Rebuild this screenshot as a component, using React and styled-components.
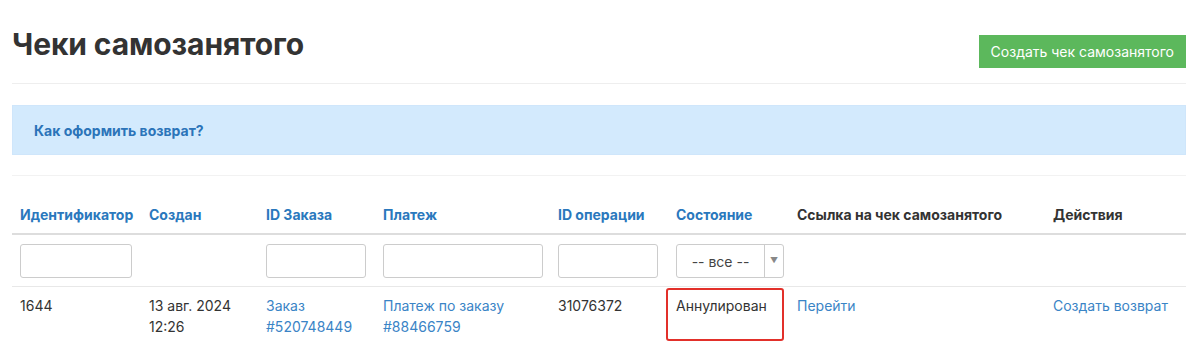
import React from 'react'
import styled, { createGlobalStyle } from 'styled-components'

const GlobalStyle = createGlobalStyle`
  body {
    margin: 0;
    background: #fff;
    font-family: Inter, "Noto Sans", Arial, sans-serif;
    color: #333;
  }
`

const Page = styled.div`
  padding: 0 14px 0 12px;
`

const TitleBar = styled.div`
  display: flex;
  justify-content: space-between;
  align-items: flex-start;
  padding: 26px 0 15px;
  border-bottom: 1px solid #eee;
`

const Title = styled.h1`
  margin: 0;
  font-size: 30px;
  font-weight: 700;
  line-height: 36px;
  color: #333;
  letter-spacing: -0.1px;
`

const GreenBtn = styled.button`
  margin-top: 9px;
  background: #5cb85c;
  border: none;
  color: #fff;
  font-family: inherit;
  font-size: 14px;
  height: 33px;
  padding: 0 12px;
  cursor: pointer;
`

const Alert = styled.div`
  margin-top: 21px;
  height: 50px;
  display: flex;
  align-items: center;
  padding: 0 21px;
  background: #d3eafd;
  border: 1px solid #cfe6fb;
  box-sizing: border-box;
`

const AlertLink = styled.a`
  font-size: 14px;
  font-weight: 700;
  color: #2b74b9;
  text-decoration: none;
`

const Table = styled.table`
  margin-top: 20px;
  width: 100%;
  table-layout: fixed;
  border-collapse: collapse;
  border-top: 1px solid #f2f2f2;
  font-size: 14px;
`

const Th = styled.th`
  text-align: left;
  vertical-align: bottom;
  font-weight: 700;
  padding: 29px 8px 8px;
  line-height: 20px;
  color: ${p => (p.$link ? '#2a78bd' : '#333')};
  border-bottom: 2px solid #ddd;
  white-space: nowrap;
`

const FilterCell = styled.td`
  padding: 9px 8px 8px;
  border-bottom: 1px solid #e8e8e8;
  height: 34px;
`

const Input = styled.input`
  display: block;
  box-sizing: border-box;
  width: ${p => p.$w}px;
  height: 34px;
  border: 1px solid #ccc;
  border-radius: 3px;
`

const Select = styled.div`
  display: flex;
  box-sizing: border-box;
  width: 108px;
  height: 34px;
  border: 1px solid #ccc;
  border-radius: 3px;
  font-size: 14px;
  color: #444;
`

const SelectValue = styled.div`
  flex: 1;
  display: flex;
  align-items: center;
  justify-content: center;
`

const SelectArrow = styled.div`
  width: 19px;
  border-left: 1px solid #ccc;
  color: #888;
  font-size: 8px;
  display: flex;
  justify-content: center;
  padding-top: 10px;
  box-sizing: border-box;
`

const Td = styled.td`
  padding: 8px 8px 0;
  vertical-align: top;
  line-height: 21px;
  height: 50px;
  color: #333;
  position: relative;
`

const Marked = styled(Td)`
  &::after {
    content: '';
    position: absolute;
    left: -2px;
    top: 1px;
    width: 118px;
    height: 53px;
    box-sizing: border-box;
    border: 2px solid #e2302a;
    border-radius: 3px;
  }
`

const Link = styled.a`
  color: #3a84c6;
  text-decoration: none;
`

const columns = [
  { title: 'Идентификатор', w: 129, link: true },
  { title: 'Создан', w: 117, link: true },
  { title: 'ID Заказа', w: 117, link: true },
  { title: 'Платеж', w: 175, link: true },
  { title: 'ID операции', w: 118, link: true },
  { title: 'Состояние', w: 121, link: true },
  { title: 'Ссылка на чек самозанятого', w: 256 },
  { title: 'Действия', w: 141 }
]

export default function App () {
  return (
    <Page>
      <GlobalStyle />
      <TitleBar>
        <Title>Чеки самозанятого</Title>
        <GreenBtn>Создать чек самозанятого</GreenBtn>
      </TitleBar>
      <Alert>
        <AlertLink href='#'>Как оформить возврат?</AlertLink>
      </Alert>
      <Table>
        <colgroup>
          {columns.map((c, i) => (
            <col key={i} style={{ width: c.w }} />
          ))}
        </colgroup>
        <thead>
          <tr>
            {columns.map((c, i) => (
              <Th key={i} $link={c.link}>{c.title}</Th>
            ))}
          </tr>
        </thead>
        <tbody>
          <tr>
            <FilterCell><Input $w={112} /></FilterCell>
            <FilterCell />
            <FilterCell><Input $w={100} /></FilterCell>
            <FilterCell><Input $w={160} /></FilterCell>
            <FilterCell><Input $w={100} /></FilterCell>
            <FilterCell>
              <Select>
                <SelectValue>-- все --</SelectValue>
                <SelectArrow>▼</SelectArrow>
              </Select>
            </FilterCell>
            <FilterCell />
            <FilterCell />
          </tr>
          <tr>
            <Td>1644</Td>
            <Td>13 авг. 2024<br />12:26</Td>
            <Td><Link href='#'>Заказ<br />#520748449</Link></Td>
            <Td><Link href='#'>Платеж по заказу<br />#88466759</Link></Td>
            <Td>31076372</Td>
            <Marked>Аннулирован</Marked>
            <Td><Link href='#'>Перейти</Link></Td>
            <Td><Link href='#'>Создать возврат</Link></Td>
          </tr>
        </tbody>
      </Table>
    </Page>
  )
}
